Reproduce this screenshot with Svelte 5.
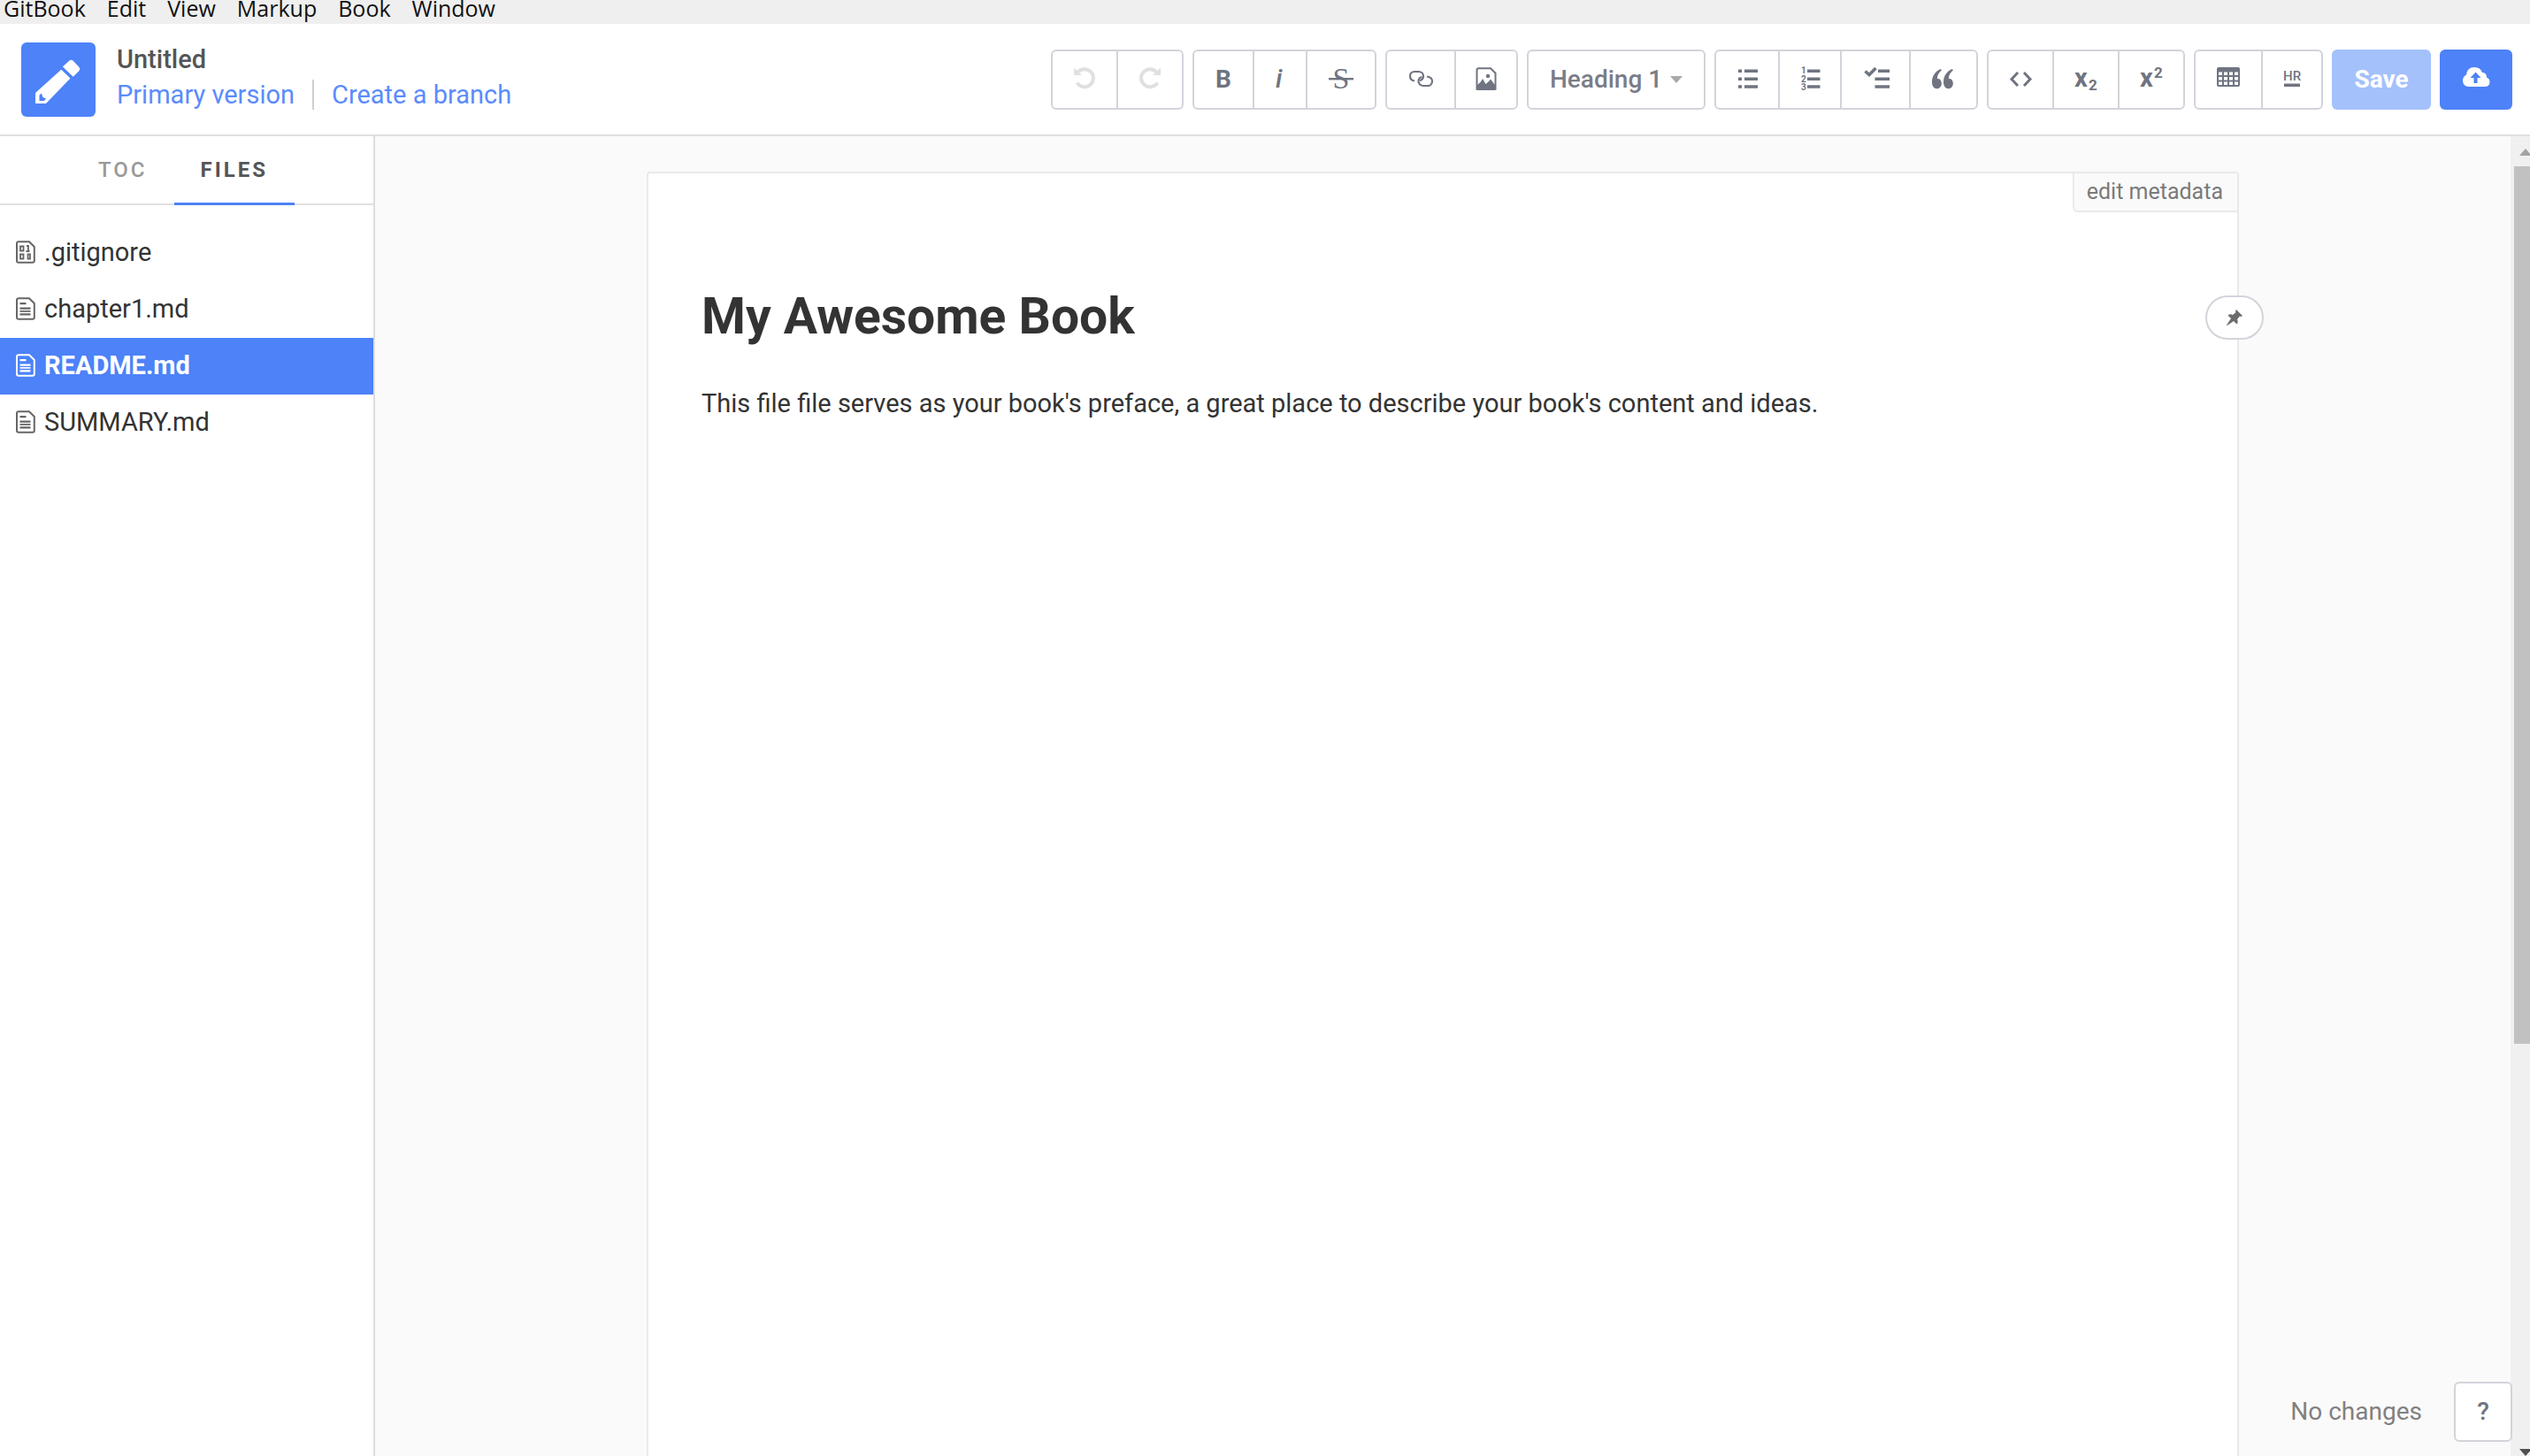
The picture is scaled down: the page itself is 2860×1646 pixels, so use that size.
<script>
  const menus = ['GitBook', 'Edit', 'View', 'Markup', 'Book', 'Window'];

  const files = [
    { name: '.gitignore', binary: true },
    { name: 'chapter1.md' },
    { name: 'README.md' },
    { name: 'SUMMARY.md' },
  ];
  let current = $state('README.md');

  const leading = [
    [
      { id: 'undo', label: 'Undo', w: 24, off: true },
      { id: 'redo', label: 'Redo', w: 24, off: true },
    ],
    [
      { id: 'bold', label: 'Bold', w: 18 },
      { id: 'italic', label: 'Italic', w: 10 },
      { id: 'strike', label: 'Strikethrough', w: 28 },
    ],
    [
      { id: 'link', label: 'Link', w: 28 },
      { id: 'image', label: 'Image', w: 20 },
    ],
  ];

  const trailing = [
    [
      { id: 'ul', label: 'Bulleted list', w: 22 },
      { id: 'ol', label: 'Numbered list', w: 20 },
      { id: 'tasks', label: 'Task list', w: 28 },
      { id: 'quote', label: 'Quote', w: 26 },
    ],
    [
      { id: 'code', label: 'Code', w: 24 },
      { id: 'sub', label: 'Subscript', w: 24 },
      { id: 'sup', label: 'Superscript', w: 24 },
    ],
    [
      { id: 'table', label: 'Table', w: 26 },
      { id: 'hr', label: 'Horizontal rule', w: 18 },
    ],
  ];
</script>

{#snippet glyph(id)}
  {#if id === 'undo'}
    <path d="M4.500 7.500A10 10 0 1 1 3.500 19.500" fill="none" stroke="currentColor" stroke-width="4" />
    <path d="M0 2.500V11h9z" />
  {:else if id === 'redo'}
    <path d="M19.500 7.500A10 10 0 1 0 20.500 19.500" fill="none" stroke="currentColor" stroke-width="4" />
    <path d="M24 2.500V11h-9z" />
  {:else if id === 'bold'}
    <text class="g-bold" x="0" y="25">B</text>
  {:else if id === 'italic'}
    <text class="g-italic" x="0" y="25">i</text>
  {:else if id === 'strike'}
    <text class="g-serif" x="14" y="26">S</text>
    <path d="M0 14h28v2.400H0z" />
  {:else if id === 'link'}
    <g fill="none" stroke="currentColor" stroke-width="2.200">
      <path d="M7 17.500C3.500 17 2 14.500 2 12c0-3 2.200-5 5-5h4.500c3 0 5.500 2 5.500 5 0 2.800-1.800 4.500-4 5" />
      <path d="M21 12.500c3.500.5 6 2.200 6 5.200 0 3-2.200 5.300-5 5.300h-5c-3 0-5.500-2.300-5.500-5.300 0-2.700 1.800-4.200 4-4.700" />
    </g>
  {:else if id === 'image'}
    <path d="M1.500 3.200h13.500l5.500 5.500v18H-.5v-21.500q0-2 2-2z" fill="none" stroke="currentColor" stroke-width="2" />
    <circle cx="12" cy="12" r="2.200" />
    <path d="M0 28v-6l3.500-3 2.500-4 3.500 6 3-2.500 2.500-3 3 4 2 2.500v6z" />
  {:else if id === 'ul'}
    <path d="M1 4.500h4v3.500H1zM1 13.500h4V17H1zM1 22.200h4v3.500H1zM8 4.500h15V8H8zM8 13.500h15V17H8zM8 22.200h15v3.500H8z" />
  {:else if id === 'ol'}
    <path d="M7 4.500h14.500V8H7zM7 13.500h14.500V17H7zM7 22.200h14.500v3.500H7z" />
    <text class="g-num" x="0" y="9">1</text>
    <text class="g-num" x="0" y="19">2</text>
    <text class="g-num" x="0" y="28">3</text>
  {:else if id === 'tasks'}
    <path d="M17 4.500h13V8H17zM13.500 13.500H30V17H13.500zM13.500 22.200H30v3.500H13.500z" />
    <path d="M2.500 6.500l4.500 4L14.500 3" fill="none" stroke="currentColor" stroke-width="3.600" />
  {:else if id === 'quote'}
    <path d="M9.500 4L11 5.200C7.500 8 6 11 5.800 15.200c2.700-.6 5 1.600 5 5 0 3.600-2.200 6-5.200 6C2 26.200 0 23.200 0 18.500 0 12 3.500 7 9.500 4z" />
    <path d="M22.500 4L24 5.200c-3.500 2.800-5 5.800-5.200 10 2.700-.6 5 1.600 5 5 0 3.600-2.200 6-5.200 6-3.600 0-5.600-3-5.600-7.700 0-6.500 3.500-11.500 9.500-14.500z" />
  {:else if id === 'code'}
    <path d="M9 8l-7 7.500L9 23M16 8l7 7.500L16 23" fill="none" stroke="currentColor" stroke-width="3" />
  {:else if id === 'sub'}
    <text class="g-x" x="-1" y="24">x</text>
    <text class="g-2" x="15" y="28">2</text>
  {:else if id === 'sup'}
    <text class="g-x" x="-1" y="24">x</text>
    <text class="g-2" x="15" y="14">2</text>
  {:else if id === 'table'}
    <path fill-rule="evenodd" d="M2 2h22q2 0 2 2v18q0 2-2 2H2q-2 0-2-2V4q0-2 2-2zM2 7.500v3.500h4V7.500zM8 7.500v3.500h4V7.500zM14 7.500v3.500h4V7.500zM20 7.500v3.500h4V7.500zM2 13v3.500h4V13zM8 13v3.500h4V13zM14 13v3.500h4V13zM20 13v3.500h4V13zM2 18.500V22h4v-3.500zM8 18.500V22h4v-3.500zM14 18.500V22h4v-3.500zM20 18.500V22h4v-3.500z" />
  {:else if id === 'hr'}
    <text class="g-hr" x="-1" y="17">HR</text>
    <path d="M0 20.500h18V24H0z" />
  {/if}
{/snippet}

{#snippet group(items)}
  <div class="group">
    {#each items as item (item.id)}
      <button class="tool" aria-label={item.label} disabled={item.off}>
        <svg width={item.w} height="32" viewBox="0 0 {item.w} 32" aria-hidden="true">{@render glyph(item.id)}</svg>
      </button>
    {/each}
  </div>
{/snippet}

<div class="app">
  <nav class="menubar" aria-label="Application menu">
    {#each menus as menu}
      <button>{menu}</button>
    {/each}
  </nav>

  <header>
    <div class="logo">
      <svg viewBox="0 0 84 84" aria-hidden="true">
        <path d="M16 57L46 30l10 10-28 29H16z" fill="#fff" />
        <path d="M45 29L54.500 20.500q2-1.500 4 0l7 7.500q1.500 2 0 4L57.500 40z" fill="#fff" />
        <path d="M44.500 27.500L59 41.500" stroke="#4d82f8" stroke-width="3.500" />
        <path d="M20.500 59.500l2.500-2 1.500 4.500 3.500 1.500-2 2.500h-5.500z" fill="#4d82f8" />
      </svg>
    </div>
    <div class="book">
      <h2>Untitled</h2>
      <div class="links">
        <a href="#primary">Primary version</a>
        <a href="#branch">Create a branch</a>
      </div>
    </div>

    <div class="toolbar">
      {#each leading as items}{@render group(items)}{/each}
      <div class="picker">
        <select aria-label="Text style">
          <option>Heading 1</option>
        </select>
        <svg width="14" height="8" viewBox="0 0 14 8" aria-hidden="true"><path d="M0 0h14L7 8z" /></svg>
      </div>
      {#each trailing as items}{@render group(items)}{/each}
      <button class="save" disabled>Save</button>
      <button class="publish" aria-label="Publish">
        <svg width="30" height="32" viewBox="0 0 30 32" aria-hidden="true">
          <path d="M7 24q-7-.5-7-7 0-4.500 4-6.500Q5 2 13.500 2q6.500 0 8.500 6 5 0 5 5.500 3.500 1.500 3.500 5 0 5.500-6 5.500z" fill="#fff" />
          <path d="M14.500 7.500l6 6.500h-4v6h-4v-6h-4z" fill="#4d82f8" />
        </svg>
      </button>
    </div>
  </header>

  <div class="body">
    <aside>
      <div class="tabs" role="tablist">
        <button role="tab" aria-selected="false">TOC</button>
        <button role="tab" aria-selected="true" class="active">FILES</button>
      </div>
      <ul class="files">
        {#each files as file (file.name)}
          <li>
            <button class:current={current === file.name} onclick={() => (current = file.name)}>
              <svg width="22" height="26" viewBox="0 0 22 26" aria-hidden="true">
                <path d="M3 1.200h12l5.800 5.800v15.800q0 2-2 2H3q-2 0-2-2V3.200q0-2 2-2z" fill="none" stroke="currentColor" stroke-width="2" />
                {#if file.binary}
                  <path d="M5 6.500h3.500v5H5zM5 15.500h3.500v5H5zM12 6h2v6M11.500 12h4M13.500 15.500h2.500v5h-2.500z" fill="none" stroke="currentColor" stroke-width="1.800" />
                {:else}
                  <path d="M4.500 6h7v2.200h-7zM4.500 11.500h12v2.200h-12zM4.500 15h12v1.800h-12zM4.500 18.200h12v2.200h-12z" />
                {/if}
              </svg>
              {file.name}
            </button>
          </li>
        {/each}
      </ul>
    </aside>

    <main>
      <article>
        <button class="metadata">edit metadata</button>
        <button class="pin" aria-label="Pin">
          <svg width="20" height="20" viewBox="0 0 20 20" aria-hidden="true">
            <path d="M12 1l7 7-1.500 1-1.500-.5-3 3.500q1.500 3-.5 5.500L9 14l-7.500 5-.5-.5L6 11 2.500 7.500q2.500-2 5.500-.5l3.500-3L11 2.500z" />
          </svg>
        </button>
        <h1>My Awesome Book</h1>
        <p>This file file serves as your book's preface, a great place to describe your book's content and ideas.</p>
      </article>
      <div class="status">
        <span>No changes</span>
        <button aria-label="Help">?</button>
      </div>
    </main>

    <div class="scrollbar" aria-hidden="true">
      <svg width="14" height="8" viewBox="0 0 14 8"><path d="M0 8L7 0l7 8z" fill="#a3a3a3" /></svg>
      <div class="track"><div class="thumb"></div></div>
      <svg width="14" height="8" viewBox="0 0 14 8"><path d="M0 0h14L7 8z" fill="#505050" /></svg>
    </div>
  </div>
</div>

<style>
  :global(body) {
    margin: 0;
  }
  .app {
    display: flex;
    flex-direction: column;
    height: 100vh;
    overflow: hidden;
    background: #fff;
    color: #333;
    font: 29px/40px Roboto, sans-serif;
  }
  button,
  select {
    margin: 0;
    padding: 0;
    border: 0;
    background: none;
    color: inherit;
    font: inherit;
    box-sizing: border-box;
  }
  svg {
    display: block;
    flex: none;
    overflow: visible;
    fill: currentColor;
  }

  .menubar {
    display: flex;
    align-items: flex-start;
    gap: 24px;
    flex: none;
    height: 27px;
    padding-left: 4px;
    background: #efefef;
    color: #111;
    font: 25px/18px "Open Sans", sans-serif;
  }

  header {
    display: flex;
    align-items: center;
    flex: none;
    box-sizing: border-box;
    height: 127px;
    padding: 0 20px 0 24px;
    border-bottom: 2px solid #e0e0e0;
  }
  .logo {
    flex: none;
    width: 84px;
    height: 84px;
    border-radius: 6px;
    background: #4d82f8;
  }
  .book {
    margin-left: 24px;
    padding-bottom: 6px;
    white-space: nowrap;
  }
  h2 {
    margin: 0;
    color: #555;
    font: 500 29px/40px Roboto, sans-serif;
  }
  .links {
    display: flex;
    align-items: center;
  }
  .links a {
    color: #5b8bfb;
    text-decoration: none;
    line-height: 40px;
  }
  .links a + a {
    margin-left: 20px;
    padding-left: 20px;
    border-left: 2px solid #ccd0d4;
    line-height: 34px;
  }

  .toolbar {
    display: flex;
    gap: 10px;
    margin-left: auto;
    color: #6f7480;
    font-size: 28px;
  }
  .group {
    display: flex;
  }
  .tool {
    display: flex;
    align-items: center;
    height: 68px;
    padding: 0 24px;
    border: 2px solid #d2d4db;
  }
  .tool + .tool {
    margin-left: -2px;
  }
  .tool:first-child {
    border-radius: 6px 0 0 6px;
  }
  .tool:last-child {
    border-radius: 0 6px 6px 0;
  }
  .tool:disabled {
    color: #e0e0e2;
  }
  .picker {
    display: flex;
    align-items: center;
    position: relative;
    color: #7a7d87;
  }
  .picker select {
    appearance: none;
    width: 202px;
    height: 68px;
    padding: 0 24px;
    border: 2px solid #d2d4db;
    border-radius: 6px;
    font-weight: 500;
  }
  .picker svg {
    position: absolute;
    right: 26px;
    fill: #aaa;
    pointer-events: none;
  }
  .save,
  .publish {
    height: 68px;
    padding: 0 26px;
    border-radius: 6px;
    background: #4d82f8;
    color: #fff;
    font-weight: 700;
  }
  .save {
    width: 112px;
    padding: 0;
    background: #a4c1fb;
  }

  .g-bold {
    font: 700 28px Roboto, sans-serif;
  }
  .g-italic {
    font: italic 500 30px Roboto, sans-serif;
  }
  .g-serif {
    font: 34px "Liberation Serif", serif;
    text-anchor: middle;
  }
  .g-num {
    font: 700 10px Roboto, sans-serif;
  }
  .g-x {
    font: 700 29px Roboto, sans-serif;
  }
  .g-2 {
    font: 700 17px Roboto, sans-serif;
  }
  .g-hr {
    font: 500 15px Roboto, sans-serif;
  }

  .body {
    display: flex;
    flex: 1;
    min-height: 0;
  }
  aside {
    flex: none;
    box-sizing: border-box;
    width: 424px;
    border-right: 2px solid #ddd;
  }
  .tabs {
    display: flex;
    justify-content: center;
    height: 76px;
    padding-right: 8px;
    border-bottom: 2px solid #e0e0e0;
    color: #999;
  }
  .tabs button {
    height: 78px;
    padding: 0 30px 2px;
    font-size: 24px;
    font-weight: 500;
    letter-spacing: 3px;
  }
  .tabs .active {
    box-shadow: inset 0 -3px #4d82f8;
    color: #555;
    font-weight: 700;
  }
  .files {
    margin: 0;
    padding: 22px 0 0;
    list-style: none;
  }
  .files button {
    display: flex;
    align-items: center;
    gap: 10px;
    width: 100%;
    height: 64px;
    padding: 0 18px 2px;
    text-align: left;
  }
  .files svg {
    color: #666;
  }
  .files .current,
  .files .current svg {
    background: #4d82f8;
    color: #fff;
    font-weight: 700;
  }

  main {
    display: flex;
    flex: 1;
    justify-content: center;
    position: relative;
    min-width: 0;
    padding: 40px 40px 0;
    background: #fafafa;
  }
  article {
    position: relative;
    flex: 1;
    box-sizing: border-box;
    max-width: 1800px;
    padding: 124px 60px 0;
    border: 2px solid #e9e9ed;
    border-bottom: 0;
    border-radius: 4px 4px 0 0;
    background: #fff;
  }
  h1 {
    margin: 0 0 40px;
    font: 700 57px/76px Roboto, sans-serif;
  }
  p {
    margin: 0;
  }
  .metadata {
    position: absolute;
    top: 0;
    right: 0;
    padding: 0 16px 0 14px;
    border: solid #e9e9ed;
    border-width: 0 0 2px 2px;
    border-radius: 0 0 0 6px;
    background: #fafafa;
    color: #7a7a7a;
    font-size: 25px;
    line-height: 42px;
  }
  .pin {
    display: flex;
    align-items: center;
    justify-content: center;
    position: absolute;
    top: 138px;
    right: -30px;
    width: 66px;
    height: 50px;
    border: 2px solid #d2d4db;
    border-radius: 25px;
    background: #fff;
    color: #6c6c6c;
  }
  .status {
    display: flex;
    align-items: center;
    gap: 36px;
    position: absolute;
    right: -2px;
    bottom: 16px;
    z-index: 1;
    color: #808080;
    font-size: 28px;
  }
  .status button {
    width: 66px;
    height: 68px;
    border: 2px solid #d2d4db;
    border-radius: 6px;
    background: #fff;
    color: #6f7480;
    font-weight: 500;
  }

  .scrollbar {
    display: flex;
    flex-direction: column;
    align-items: flex-end;
    gap: 12px;
    flex: none;
    box-sizing: border-box;
    width: 22px;
    padding-top: 14px;
    background: #f0f0f0;
  }
  .scrollbar svg {
    margin-right: -2px;
  }
  .track {
    flex: 1;
    width: 18px;
  }
  .thumb {
    height: 69%;
    background: #c1c1c1;
  }
</style>
